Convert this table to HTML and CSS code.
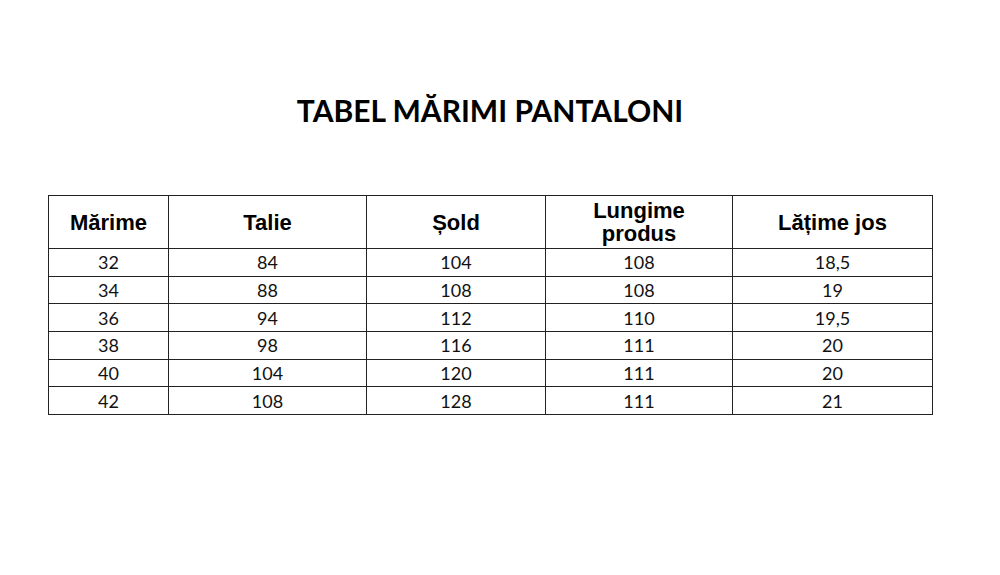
FILE: index.html
```html
<!DOCTYPE html>
<html lang="ro">
<head>
<meta charset="utf-8">
<link rel="stylesheet" href="styles.css">
</head>
<body>
<div class="page">
  <h1 class="title">TABEL MĂRIMI PANTALONI</h1>
  <table class="sizes">
    <colgroup>
      <col class="c1"><col class="c2"><col class="c3"><col class="c4"><col class="c5">
    </colgroup>
    <thead>
      <tr><th>Mărime</th><th>Talie</th><th>Șold</th><th>Lungime<br>produs</th><th>Lățime jos</th></tr>
    </thead>
    <tbody>
      <tr><td>32</td><td>84</td><td>104</td><td>108</td><td>18,5</td></tr>
      <tr><td>34</td><td>88</td><td>108</td><td>108</td><td>19</td></tr>
      <tr><td>36</td><td>94</td><td>112</td><td>110</td><td>19,5</td></tr>
      <tr><td>38</td><td>98</td><td>116</td><td>111</td><td>20</td></tr>
      <tr><td>40</td><td>104</td><td>120</td><td>111</td><td>20</td></tr>
      <tr><td>42</td><td>108</td><td>128</td><td>111</td><td>21</td></tr>
    </tbody>
  </table>
</div>
</body>
</html>
```
FILE: styles.css
```css
html, body {
  margin: 0;
  padding: 0;
  background: #ffffff;
}
.page {
  width: 884px;
  margin-left: 48px;
  padding-top: 92px;
}
.title {
  margin: 0;
  text-align: center;
  font-family: Lato, "Open Sans", sans-serif;
  font-weight: 700;
  font-size: 30px;
  line-height: 36px;
  color: #000;
  letter-spacing: 0;
}
.sizes {
  margin-top: 67px;
  width: 884px;
  border-collapse: collapse;
  table-layout: fixed;
  color: #000;
}
.c1 { width: 120px; }
.c2 { width: 198px; }
.c3 { width: 179px; }
.c4 { width: 187px; }
.c5 { width: 200px; }
.sizes th, .sizes td {
  border: 1px solid #222;
  text-align: center;
  padding: 0;
}
.sizes th {
  font-family: "Liberation Sans", Arial, sans-serif;
  font-weight: 700;
  font-size: 22px;
  line-height: 23px;
  height: 52px;
}
.sizes td {
  font-family: Lato, "Open Sans", sans-serif;
  font-size: 18px;
  line-height: 26px;
  height: 26.7px;
  color: #111;
}
```
